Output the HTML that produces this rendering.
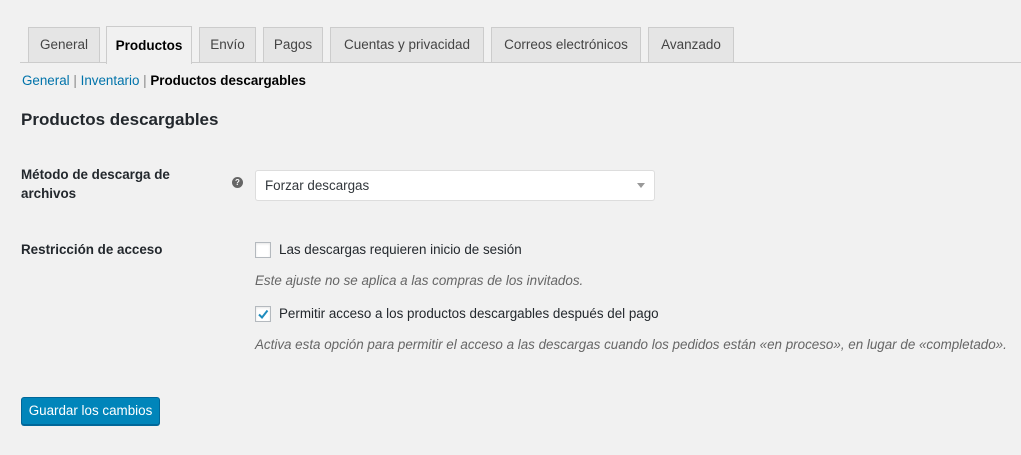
<!DOCTYPE html><html><head><style>
body{margin:0;width:1021px;height:455px;background:#f1f1f1;font-family:"Liberation Sans",sans-serif;font-size:13.4px;color:#23282d;position:relative;overflow:hidden}
.a{position:absolute;white-space:nowrap}
.tab{position:absolute;top:27px;height:34px;background:#e5e5e5;border:1px solid #ccc;border-bottom:none;line-height:34px;text-align:center;font-size:13.5px;color:#444}
.line{position:absolute;left:20px;right:0;top:62px;border-top:1px solid #ccc}
a{color:#0073aa;text-decoration:none}
.cb{position:absolute;width:14px;height:14px;border:1px solid #b4b9be;background:#fff;box-shadow:inset 0 1px 2px rgba(0,0,0,.1)}
.d{font-style:italic;color:#666}
</style></head><body>
<div class="line"></div>
<div class="tab" style="left:28px;width:70px">General</div>
<div class="tab" style="left:106px;width:84px;top:26px;height:37px;background:#f1f1f1;color:#000;line-height:37px;font-weight:600">Productos</div>
<div class="tab" style="left:199px;width:55px">Envío</div>
<div class="tab" style="left:263px;width:58px">Pagos</div>
<div class="tab" style="left:330px;width:152px">Cuentas y privacidad</div>
<div class="tab" style="left:491px;width:148px">Correos electrónicos</div>
<div class="tab" style="left:648px;width:84px">Avanzado</div>
<div class="a" style="left:22px;top:73px"><a>General</a> <span style="color:#888">|</span> <a>Inventario</a> <span style="color:#888">|</span> <b style="font-weight:600;color:#000">Productos descargables</b></div>
<div class="a" style="left:21px;top:110px;font-size:17px;font-weight:600;color:#23282d">Productos descargables</div>
<div class="a" style="left:21px;top:165px;font-weight:600;line-height:19px">Método de descarga de<br>archivos</div>
<div class="a" style="left:232px;top:177px;width:11px;height:11px;border-radius:50%;background:#666;color:#fff;font-size:8px;line-height:11px;text-align:center;font-weight:bold">?</div>
<div class="a" style="left:255px;top:170px;width:398px;height:29px;background:#fff;border:1px solid #ddd;border-radius:3px;line-height:29px"><span style="margin-left:9px;color:#32373c">Forzar descargas</span><span style="position:absolute;right:9px;top:12px;border:4px solid transparent;border-top:5px solid #999;border-bottom:none"></span></div>
<div class="a" style="left:21px;top:242px;font-weight:600">Restricción de acceso</div>
<div class="cb" style="left:255px;top:242px"></div>
<div class="a" style="left:279px;top:242px">Las descargas requieren inicio de sesión</div>
<div class="a d" style="left:255px;top:273px">Este ajuste no se aplica a las compras de los invitados.</div>
<div class="cb" style="left:255px;top:306px"><svg width="14" height="14" style="position:absolute;left:0;top:0"><path d="M3 7.5l3 3 5.5-7" stroke="#1e8cbe" stroke-width="2" fill="none"/></svg></div>
<div class="a" style="left:279px;top:306px">Permitir acceso a los productos descargables después del pago</div>
<div class="a d" style="left:255px;top:337px">Activa esta opción para permitir el acceso a las descargas cuando los pedidos están «en proceso», en lugar de «completado».</div>
<div class="a" style="left:21px;top:397px;width:137px;height:26px;background:#0085ba;border:1px solid #006799;border-radius:3px;box-shadow:0 1px 0 #006799;color:#fff;line-height:26px;text-align:center">Guardar los cambios</div>
</body></html>
